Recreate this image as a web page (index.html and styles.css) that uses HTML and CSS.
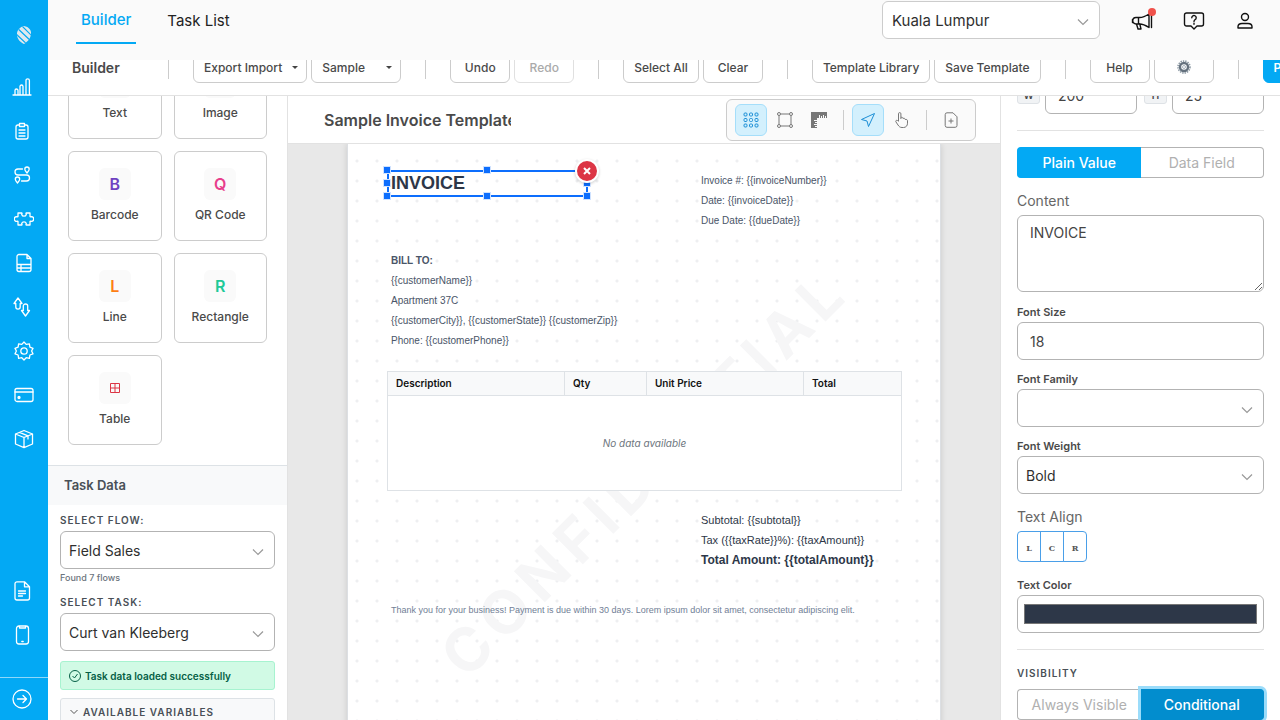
FILE: index.html
```html
<!DOCTYPE html>
<html lang="en">
<head>
<meta charset="utf-8">
<meta name="viewport" content="width=device-width, initial-scale=1">
<title>Builder</title>
<link rel="stylesheet" href="styles.css">
</head>
<body>
<nav class="rail" aria-label="Main">
  <a class="rail-logo" href="#" aria-label="Home">
    <svg width="16" height="20" viewBox="0 0 16 20"><defs><clipPath id="leaf"><path d="M8 1C13 2 15.500 5 15 9c-.5 5-4 8-7 10C4 17 1 14 1 9c0-4 3-7 7-8z"/></clipPath></defs><g clip-path="url(#leaf)"><rect width="16" height="20" fill="#dfe9ee"/><path d="M-2 7l18 17M-1 1l18 17M4-1l14 14" stroke="#03a9f4" stroke-width="1.200"/></g></svg>
  </a>
  <a class="rail-item rail-narrow" href="#" aria-label="Reports"><svg class="ic" viewBox="0 0 20 20"><path d="M1 18h18M3 18v-4.500a1.500 1.500 0 013 0V18M8 18V9.500a1.500 1.500 0 013 0V18M14 18V3.500a1.700 1.700 0 013.400 0V18"/></svg></a>
  <a class="rail-item rail-narrow" href="#" aria-label="Tasks"><svg class="ic" viewBox="0 0 20 20"><path d="M7 4H6a2 2 0 00-2 2v10a2 2 0 002 2h8a2 2 0 002-2V6a2 2 0 00-2-2h-1M7.500 2.500h5v3h-5zM7 9h6M7 12h6M7 15h6"/></svg></a>
  <a class="rail-item rail-narrow" href="#" aria-label="Flows"><svg class="ic" viewBox="0 0 20 20"><path d="M15 8c-1.500-1.700-2.200-2.700-2.200-3.800a2.200 2.200 0 014.400 0C17.200 5.300 16.500 6.300 15 8zM5.500 18c-1.500-1.700-2.200-2.700-2.200-3.800a2.200 2.200 0 014.400 0c0 1.100-.7 2.100-2.200 3.800zM10.500 4H6a3 3 0 000 6h8.500a3 3 0 010 6H9.500"/></svg></a>
  <a class="rail-item" href="#" aria-label="Integrations"><svg class="ic" viewBox="0 0 20 20"><path d="M4 4h3.800c.4 0 .2.800-.1 1.500a2.400 2.400 0 004.600 0c-.3-.7-.5-1.500-.1-1.500H16v3.500c0 .5.800.3 1.300.1a2 2 0 010 4.800c-.5-.2-1.300-.4-1.300.1V16h-3.800c-.4 0-.2-.8.1-1.500a2.400 2.400 0 00-4.600 0c.3.700.5 1.500.1 1.500H4v-3.500c0-.5-.8-.3-1.300-.1a2 2 0 010-4.800c.5.200 1.300.4 1.300-.1z"/></svg></a>
  <a class="rail-item" href="#" aria-label="Forms"><svg class="ic" viewBox="0 0 20 20"><path d="M5 1.500h8l4 4V16.500a2 2 0 01-2 2H5a2 2 0 01-2-2v-13a2 2 0 012-2zM13 1.500v4h4M3 11.500h14M3 15h14M7 11.500v7"/></svg></a>
  <a class="rail-item rail-narrow" href="#" aria-label="Transfers"><svg class="ic" viewBox="0 0 20 20"><path d="M6 1L10 6.500H8.200V10c0 2.700-4.400 2.700-4.400 0V6.500H2zM13.500 19l-4-5.500h1.800V9c0-2.700 4.400-2.700 4.400 0v4.500h1.800z"/></svg></a>
  <a class="rail-item" href="#" aria-label="Settings"><svg class="ic" viewBox="0 0 20 20"><path d="M10 1l2.200 2.400 3.200-.6.500 3.300 3.100 1.300L17.600 10l1.400 2.800-3.100 1.200-.5 3.300-3.200-.6L10 19l-2.200-2.300-3.200.6-.5-3.300L1 12.800 2.400 10 1 7.400l3.100-1.300.5-3.300 3.200.6z"/><circle cx="10" cy="10" r="3.200"/></svg></a>
  <a class="rail-item" href="#" aria-label="Billing"><svg class="ic" viewBox="0 0 20 20"><rect x="1" y="3.500" width="18" height="13" rx="2"/><path d="M1 7h18"/><circle cx="5" cy="12.500" r="1" fill="#fff"/></svg></a>
  <a class="rail-item" href="#" aria-label="Products"><svg class="ic" viewBox="0 0 20 20"><path d="M10 1.500l8.500 3.500v10L10 18.700 1.500 15V5zM1.500 5L10 8.500 18.500 5M10 8.500v10M5.500 3.400l8.500 3.500v3"/></svg></a>
  <span class="rail-space"></span>
  <a class="rail-item rail-narrow" href="#" aria-label="Documents"><svg class="ic" viewBox="0 0 20 20"><path d="M5 .8h7.500l5 5V17a2 2 0 01-2 2H5a2 2 0 01-2-2V2.800a2 2 0 012-2zM12.500.8v5h5M6.500 10h7M6.500 12.500h7M6.500 15h4"/></svg></a>
  <a class="rail-item rail-narrow" href="#" aria-label="Mobile"><svg class="ic" viewBox="0 0 20 20"><rect x="4.500" y="1" width="12" height="18" rx="2.500"/><path d="M7.500 1.500v1.500h6V1.500M9.800 16.500h1.400"/></svg></a>
  <a class="rail-foot rail-narrow" href="#" aria-label="Expand"><svg class="ic" viewBox="0 0 20 20"><circle cx="10" cy="10" r="9"/><path d="M5.500 10h9M11 6.500l3.500 3.500-3.500 3.500"/></svg></a>
</nav>

<div class="app">
  <header class="top">
    <nav class="tabs" aria-label="Sections">
      <a class="tab tab-on" href="#">Builder</a>
      <a class="tab" href="#">Task List</a>
    </nav>
    <div class="top-right">
      <div class="pick pick-city">
        <select class="field" aria-label="City"><option>Kuala Lumpur</option></select>
        <svg class="chev" viewBox="0 0 12 8"><path d="M1 1.500l5 5 5-5"/></svg>
      </div>
      <div class="top-icons">
        <button class="bare" aria-label="Announcements"><svg class="ink" width="22" height="20" viewBox="0 0 22 20"><path d="M5 6.500h3.500C12 6.500 15 5 18 3v13.500c-3-2-6-3.500-9.500-3.500H5a3.200 3.200 0 010-6.500zM7.500 6.500V13M5.500 13l1.500 5h3l-1.200-5M20.500 3.500v13M1.500 8.500v3"/></svg><span class="dot"></span></button>
        <button class="bare" aria-label="Help"><svg class="ink" width="22" height="20" viewBox="0 0 22 20"><path d="M3.500 2h15a2 2 0 012 2v9a2 2 0 01-2 2H14l-3 3-3-3H3.500a2 2 0 01-2-2V4a2 2 0 012-2zM8.800 6.800a2.200 2.200 0 114 1.200c-.6.700-1.800 1.200-1.800 2.500M11 12.300v.9"/></svg></button>
        <button class="bare" aria-label="Account"><svg class="ink" width="20" height="20" viewBox="0 0 20 20"><circle cx="10" cy="6" r="3.500"/><path d="M3 17v-1.200C3 13.500 5 12.500 7 12.500h6c2 0 4 1 4 3.300V17z"/></svg></button>
      </div>
    </div>
  </header>

  <div class="toolbar">
    <h1 class="brand">Builder</h1>
    <span class="sep"></span>
    <div class="group"><button class="btn btn-menu">Export Import<i class="caret"></i></button><button class="btn btn-menu btn-sample">Sample<i class="caret"></i></button></div>
    <span class="sep"></span>
    <div class="group"><button class="btn">Undo</button><button class="btn" disabled>Redo</button></div>
    <span class="sep"></span>
    <div class="group"><button class="btn">Select All</button><button class="btn">Clear</button></div>
    <span class="sep"></span>
    <div class="group"><button class="btn">Template Library</button><button class="btn">Save Template</button></div>
    <span class="sep"></span>
    <div class="group"><button class="btn">Help</button><button class="btn" aria-label="Settings"><svg width="14" height="14" viewBox="0 0 14 14" fill="none"><circle cx="7" cy="7" r="6" stroke="#8b98a3" stroke-width="1.600" stroke-dasharray="1.400 1"/><circle cx="7" cy="7" r="4" stroke="#64717e" stroke-width="2.400"/><circle cx="7" cy="7" r="1.500" stroke="#a9b5bf"/></svg></button></div>
    <span class="sep"></span>
    <button class="btn btn-main">Preview</button>
  </div>

  <div class="work">
    <aside class="left">
      <div class="palette">
        <div class="tiles">
          <button class="tile"><span class="glyph"></span>Text</button>
          <button class="tile"><span class="glyph"></span>Image</button>
          <button class="tile"><span class="glyph g-violet">B</span>Barcode</button>
          <button class="tile"><span class="glyph g-pink">Q</span>QR Code</button>
          <button class="tile"><span class="glyph g-orange">L</span>Line</button>
          <button class="tile"><span class="glyph g-green">R</span>Rectangle</button>
          <button class="tile"><span class="glyph"><svg width="10" height="10" viewBox="0 0 10 10" fill="none" stroke="#dc3545"><path d="M.5.5h9v9h-9zM5 .5v9M.5 5h9"/></svg></span>Table</button>
        </div>
      </div>
      <h2 class="data-head">Task Data</h2>
      <div class="data">
        <label class="caps" for="flow">Select Flow:</label>
        <div class="pick">
          <select class="field" id="flow"><option>Field Sales</option></select>
          <svg class="chev" viewBox="0 0 12 8"><path d="M1 1.500l5 5 5-5"/></svg>
        </div>
        <p class="hint">Found 7 flows</p>
        <label class="caps" for="task">Select Task:</label>
        <div class="pick">
          <select class="field" id="task"><option>Curt van Kleeberg</option></select>
          <svg class="chev" viewBox="0 0 12 8"><path d="M1 1.500l5 5 5-5"/></svg>
        </div>
        <p class="ok"><svg width="12" height="12" viewBox="0 0 12 12" fill="none" stroke="#065f46"><circle cx="6" cy="6" r="5.500"/><path d="M3.500 6l2 2 3-4"/></svg>Task data loaded successfully</p>
        <button class="vars"><svg width="8" height="6" viewBox="0 0 8 6" fill="none" stroke="#555"><path d="M.5 1L4 4.500 7.500 1"/></svg>Available Variables</button>
      </div>
    </aside>

    <main class="center">
      <div class="center-bar">
        <input class="title" value="Sample Invoice Template" aria-label="Template name">
        <div class="tools">
          <button class="tool tool-on" aria-label="Grid"><svg width="16" height="16" viewBox="0 0 16 16"><g id="r"><rect x="1" y="1" width="3" height="3" rx="1"/><rect x="6.500" y="1" width="3" height="3" rx="1"/><rect x="12" y="1" width="3" height="3" rx="1"/></g><use href="#r" y="5.500"/><use href="#r" y="11"/></svg></button>
          <button class="tool" aria-label="Bounds"><svg width="16" height="16" viewBox="0 0 16 16"><path d="M3.500 2h9M3.500 14h9M2 3.500v9M14 3.500v9"/><circle cx="2" cy="2" r="1.500"/><circle cx="14" cy="2" r="1.500"/><circle cx="2" cy="14" r="1.500"/><circle cx="14" cy="14" r="1.500"/></svg></button>
          <button class="tool" aria-label="Rulers"><svg width="16" height="16" viewBox="0 0 16 16"><path d="M0 0h16v6h-1V4h-1v2h-1V3h-1v3h-1V4h-1v2H9V3H8v3H6v2H3v1h3v1H4v1h2v1H3v1h3v1H4v1h2v1H0z" fill="#777" stroke="none"/></svg></button>
          <span class="tool-sep"></span>
          <button class="tool tool-on" aria-label="Select"><svg width="16" height="16" viewBox="0 0 16 16"><path d="M14.500 1.500L1.500 7.500l5.500 1.500 1.500 5.500z"/></svg></button>
          <button class="tool" aria-label="Pan"><svg width="16" height="16" viewBox="0 0 16 16"><path d="M4.500 9V1.800a1.200 1.200 0 012.400 0V7M6.900 5.500c1.200-.6 2 0 2.100 1 1.200-.6 2 0 2.200 1 1.400-.4 2.300.2 2.300 1.400v2.300c0 2.500-1.500 4.300-4 4.300H8c-2 0-3-1-4-2.500L1.800 9.700c-.3-1 .8-1.900 1.700-1.200l1 1"/></svg></button>
          <span class="tool-sep"></span>
          <button class="tool" aria-label="Add page"><svg width="16" height="16" viewBox="0 0 16 16"><path d="M4 .8h6l4 4V13.500a1.800 1.800 0 01-1.800 1.800H4a1.800 1.800 0 01-1.800-1.800V2.600A1.800 1.800 0 014 .8zM8 6.500v5M5.500 9h5"/></svg></button>
        </div>
      </div>
      <div class="stage">
        <div class="page">
          <div class="mark">CONFIDENTIAL</div>
          <div class="el sel">INVOICE
            <i class="h h-nw"></i><i class="h h-n"></i><i class="h h-w"></i><i class="h h-e"></i><i class="h h-sw"></i><i class="h h-s"></i><i class="h h-se"></i>
            <button class="del" aria-label="Delete"><svg width="8" height="8" viewBox="0 0 8 8"><path d="M1 1l6 6M7 1L1 7" stroke="#fff" stroke-width="2"/></svg></button>
          </div>
          <div class="el meta"><p>Invoice #: {{invoiceNumber}}</p><p>Date: {{invoiceDate}}</p><p>Due Date: {{dueDate}}</p></div>
          <div class="el bill"><p class="b">BILL TO:</p><p>{{customerName}}</p><p>Apartment 37C</p><p>{{customerCity}}, {{customerState}} {{customerZip}}</p><p>Phone: {{customerPhone}}</p></div>
          <table class="lines">
            <colgroup><col class="c1"><col class="c2"><col class="c3"><col class="c4"></colgroup>
            <thead><tr><th>Description</th><th>Qty</th><th>Unit Price</th><th>Total</th></tr></thead>
            <tbody><tr><td colspan="4">No data available</td></tr></tbody>
          </table>
          <div class="el sums"><p>Subtotal: {{subtotal}}</p><p>Tax ({{taxRate}}%): {{taxAmount}}</p><p class="grand">Total Amount: {{totalAmount}}</p></div>
          <p class="el thanks">Thank you for your business! Payment is due within 30 days. Lorem ipsum dolor sit amet, consectetur adipiscing elit.</p>
        </div>
      </div>
    </main>

    <aside class="right">
      <div class="dims-clip"><div class="dims">
        <label class="badge" for="w">W</label><input class="field" id="w" value="200">
        <label class="badge" for="h">H</label><input class="field" id="h" value="25">
      </div></div>
      <hr class="rule">
      <div class="switch"><button class="on">Plain Value</button><button>Data Field</button></div>
      <label class="lab-big" for="content">Content</label>
      <textarea class="field area" id="content">INVOICE</textarea>
      <label class="lab" for="size">Font Size</label>
      <input class="field" id="size" value="18">
      <label class="lab" for="family">Font Family</label>
      <div class="pick">
        <select class="field" id="family"><option></option></select>
        <svg class="chev" viewBox="0 0 12 8"><path d="M1 1.500l5 5 5-5"/></svg>
      </div>
      <label class="lab" for="weight">Font Weight</label>
      <div class="pick">
        <select class="field" id="weight"><option>Bold</option></select>
        <svg class="chev" viewBox="0 0 12 8"><path d="M1 1.500l5 5 5-5"/></svg>
      </div>
      <span class="lab-big">Text Align</span>
      <div class="align"><button>L</button><button>C</button><button>R</button></div>
      <label class="lab lab-color" for="color">Text Color</label>
      <input class="field color" id="color" type="color" value="#2d3748">
      <hr class="rule">
      <h3 class="caps caps-vis">Visibility</h3>
      <div class="switch"><button>Always Visible</button><button class="on focus">Conditional</button></div>
    </aside>
  </div>
</div>
</body>
</html>
```

FILE: styles.css
```css
* { box-sizing: border-box; }
body, p, h1, h2, h3 { margin: 0; }
body {
  display: flex;
  height: 100vh;
  overflow: hidden;
  font-family: Inter, "Liberation Sans", sans-serif;
  font-size: 14px;
  color: #4a4a4a;
  background: #fff;
}
button, input, select, textarea { font: inherit; color: inherit; }
button { cursor: pointer; }
a { color: inherit; text-decoration: none; }

/* Icon rail */
.rail { flex: none; width: 48px; display: flex; flex-direction: column; background: #03a9f4; }
.rail-logo { height: 65px; padding-top: 5px; display: grid; place-items: center; }
.rail-item, .rail-foot { display: grid; place-items: center; height: 44px; }
.rail-narrow { padding-right: 4px; }
.rail-space { flex: 1; }
.rail-foot { height: 43px; margin-top: 20px; border-top: 1px solid #8fd8fa; }
.ic { width: 20px; height: 20px; fill: none; stroke: #fff; stroke-width: 1.3; stroke-linejoin: round; stroke-linecap: round; }

/* Header */
.app { flex: 1; min-width: 0; display: flex; flex-direction: column; }
.top { flex: none; height: 60px; padding: 0 25px 0 28px; display: flex; justify-content: space-between; background: #fafafa; }
.tabs { display: flex; gap: 26px; }
.tab { height: 44px; padding: 0 5px; line-height: 42px; font-size: 15px; color: #222; border-bottom: 2px solid transparent; }
.tab-on { color: #03a9f4; font-weight: 500; line-height: 40px; border-color: #03a9f4; }
.top-right { display: flex; gap: 31px; padding-top: 1px; }
.pick { position: relative; }
.pick-city { width: 218px; }
.pick-city .field { font-size: 15px; border-color: #ccc; }
.top-icons { display: flex; align-items: center; gap: 30px; height: 40px; }
.bare { position: relative; display: flex; padding: 0; border: 0; background: none; }
.ink { fill: none; stroke: #111; stroke-width: 1.4; stroke-linejoin: round; stroke-linecap: round; }
.dot { position: absolute; top: -3px; right: -3px; width: 8px; height: 8px; border-radius: 50%; background: #f0524b; }

/* Form fields */
.field { display: block; width: 100%; height: 38px; padding: 0 12px; border: 1px solid #b3b3b3; border-radius: 6px; background: #fff; color: #444; font-size: 14px; }
select.field { appearance: none; padding: 0 30px 0 8px; color: #2f2f2f; }
.pick-city select.field { padding-left: 9px; }
.chev { position: absolute; right: 11px; top: 17px; width: 12px; height: 8px; fill: none; stroke: #999; stroke-width: 1.2; pointer-events: none; }

/* Toolbar */
.toolbar { flex: none; height: 36px; overflow: hidden; padding: 0 0 12px 24px; display: flex; align-items: flex-end; gap: 24px; border-bottom: 1px solid #e2e2e2; }
.brand { flex: none; width: 72px; font-size: 14px; font-weight: 600; line-height: 30px; }
.sep { flex: none; width: 1px; height: 28px; margin-bottom: 4px; background: #ccc; }
.group { flex: none; display: flex; gap: 4px; }
.btn { flex: none; display: flex; align-items: center; justify-content: center; min-width: 60px; height: 32px; padding: 0 10px; border: 1px solid #ccc; border-radius: 6px; background: #fff; font-size: 12px; font-weight: 500; white-space: nowrap; }
.btn-menu { justify-content: space-between; gap: 10px; padding-right: 8px; }
.btn-sample { min-width: 90px; }
.btn:disabled { color: #aaa; border-color: #e0e0e0; }
.btn-main { background: #03a9f4; border-color: #03a9f4; color: #fff; font-weight: 600; }
.caret { border: 3px solid transparent; border-top-color: #444; border-bottom: 0; }

.work { flex: 1; min-height: 0; display: flex; }

/* Element palette and task data */
.left { flex: none; width: 240px; display: flex; flex-direction: column; overflow: hidden; border-right: 1px solid #e2e2e2; }
.palette { flex: 1; min-height: 0; overflow: hidden; display: flex; flex-direction: column; justify-content: flex-end; }
.tiles { flex: none; display: grid; grid-template-columns: 1fr 1fr; gap: 12px; padding: 20px; }
.tile { display: flex; flex-direction: column; align-items: center; gap: 6px; height: 90px; padding: 16px 0 0; border: 1px solid #ccc; border-radius: 6px; background: #fff; font-size: 12px; font-weight: 500; line-height: 18px; }
.glyph { display: grid; place-items: center; width: 32px; height: 32px; border-radius: 6px; background: #fafafa; font-size: 16px; font-weight: 600; }
.g-violet { color: #6f42c1; }
.g-pink { color: #e83e8c; }
.g-orange { color: #fd7e14; }
.g-green { color: #20c997; }
.data-head { flex: none; height: 40px; padding-left: 16px; font-size: 13px; font-weight: 600; line-height: 39px; border-top: 1px solid #dde2e6; background: #f8f9fa; color: #495057; }
.data { flex: none; height: 215px; padding: 8px 12px 0; }
.caps { display: block; height: 18px; line-height: 15px; font-size: 10px; font-weight: 600; letter-spacing: 1px; text-transform: uppercase; color: #495057; }
.hint { height: 26px; font-size: 9px; font-weight: 500; line-height: 18px; color: #6c757d; }
.ok { display: flex; align-items: center; gap: 4px; height: 29px; margin: 10px 0 8px; padding-left: 8px; border: 1px solid #a7f3d0; border-radius: 3px; background: #d1fae5; color: #065f46; font-size: 10px; font-weight: 600; }
.vars { display: flex; align-items: center; gap: 5px; width: 100%; height: 28px; padding: 0 9px; border: 1px solid #dde2e6; border-radius: 3px 3px 0 0; background: #f8f9fa; color: #495057; font-size: 10px; font-weight: 600; letter-spacing: 1px; text-transform: uppercase; }

/* Canvas */
.center { flex: 1; min-width: 0; display: flex; flex-direction: column; background: #e8e8e8; }
.center-bar { flex: none; height: 48px; padding: 0 24px 0 36px; display: flex; align-items: center; justify-content: space-between; background: #fff; border-bottom: 1px solid #e2e2e2; }
.title { width: 187px; padding: 0; border: 0; font-size: 16px; font-weight: 600; color: #4a4a4a; background: none; }
.tools { display: flex; align-items: center; gap: 2px; height: 42px; padding: 0 8px; border: 1px solid #ccc; border-radius: 6px; background: #fafafa; }
.tool { display: grid; place-items: center; width: 32px; height: 32px; padding: 0; border: 1px solid transparent; border-radius: 6px; background: none; }
.tool svg { fill: none; stroke: #777; stroke-width: 1; stroke-linejoin: round; }
.tool-on { background: #d3f0fd; border-color: #a5defa; }
.tool-on svg { stroke: #1d8fd6; }
.tool-sep { width: 1px; height: 20px; margin: 0 6px; background: #ccc; }
.stage { flex: 1; min-height: 0; overflow: hidden; display: flex; justify-content: center; }
.page { position: relative; flex: none; width: 594px; height: 842px; border: solid #dcdfe3; border-width: 0 1px; background: #fff radial-gradient(circle, #eeeff1 1px, transparent 2px) -1px 7px / 20px 20px; box-shadow: 0 0 6px #0002; font-family: "Liberation Sans", Arial, sans-serif; font-size: 10px; line-height: 20px; color: #4a5568; }
.mark { position: absolute; left: 296px; top: 328px; transform: translate(-50%, -50%) rotate(-45deg); font-family: Inter, sans-serif; font-size: 60px; font-weight: 700; line-height: 72px; letter-spacing: 8px; color: #f6f6f7; }
.el { position: absolute; padding: 0 4px; white-space: nowrap; }
.sel { left: 39px; top: 26px; width: 201px; height: 27px; padding: 0 2px; border: 2px solid #0d6efd; font-size: 18px; font-weight: 700; color: #2d3748; line-height: 22px; }
.h { position: absolute; width: 8px; height: 8px; background: #0d6efd; border: 1px solid #cfe2ff; }
.h-nw { left: -6px; top: -6px; }
.h-n { left: 94px; top: -6px; }
.h-w { left: -6px; top: 7px; }
.h-e { right: -5px; top: 7px; }
.h-sw { left: -6px; bottom: -5px; }
.h-s { left: 94px; bottom: -5px; }
.h-se { right: -5px; bottom: -5px; }
.del { position: absolute; right: -13px; top: -13px; width: 24px; height: 24px; padding: 0; display: grid; place-items: center; border: 2px solid #fff; border-radius: 50%; background: #dc3545; box-shadow: 0 1px 3px #0003; }
.meta { left: 349px; top: 27px; }
.bill { left: 39px; top: 107px; }
.b { font-weight: 700; }
.lines { position: absolute; left: 39px; top: 227px; width: 515px; height: 120px; table-layout: fixed; border-collapse: collapse; background: #fff; font-family: Inter, sans-serif; line-height: 14px; }
.lines th { height: 24px; padding: 0 8px 1px; border: 1px solid #dee2e6; background: #f8f9fa; text-align: left; font-weight: 600; color: #111; }
.lines td { border: 1px solid #dee2e6; text-align: center; font-style: italic; color: #6c757d; }
.c1 { width: 177px; }
.c2 { width: 82px; }
.c3 { width: 157px; }
.sums { left: 349px; top: 366px; font-size: 11px; color: #2d3748; }
.grand { font-size: 12px; font-weight: 700; }
.thanks { left: 39px; top: 456px; font-size: 9px; color: #718096; }

/* Properties */
.right { flex: none; width: 280px; padding: 0 16px; overflow: hidden; border-left: 1px solid #e2e2e2; }
.dims-clip { height: 18px; overflow: hidden; display: flex; flex-direction: column; justify-content: flex-end; }
.dims { flex: none; display: flex; align-items: center; gap: 5px; }
.dims .field { flex: 1; min-width: 0; }
.badge { width: 23px; height: 18px; border: 1px solid #dee2e6; border-radius: 3px; background: #f1f3f5; text-align: center; font-size: 10px; font-weight: 600; line-height: 16px; }
.dims .field + .badge { margin-left: 2px; }
.rule { height: 1px; margin: 16px 0; border: 0; background: #e2e2e2; }
.switch { display: flex; height: 31px; }
.switch button { flex: 1; padding: 0; border: 1px solid #b3b3b3; background: #fff; color: #b0b0b0; }
.switch button:first-child { border-radius: 4px 0 0 4px; border-right: 0; }
.switch button:last-child { border-radius: 0 4px 4px 0; border-left: 0; }
.switch .on { background: #03a9f4; border-color: #03a9f4; color: #fff; font-weight: 500; }
.switch .focus { background: #028dce; border-color: #028dce; box-shadow: 0 0 0 3px #9bdcfa; }
.lab-big { display: block; height: 37px; padding-top: 15px; line-height: 16px; font-size: 14px; color: #666; }
.area { height: 77px; margin-bottom: 1px; padding: 9px 12px; line-height: 16px; }
.lab { display: block; height: 29px; padding-top: 11px; line-height: 16px; font-size: 11px; font-weight: 600; }
.align { display: flex; height: 31px; }
.align button { width: 24px; padding: 3px 0 0; margin-right: -1px; border: 1px solid #4a9fe8; background: #fff; font-family: "DejaVu Serif", serif; font-size: 8px; font-weight: 700; color: #555; }
.align button:first-child { border-radius: 4px 0 0 4px; }
.align button:last-child { border-radius: 0 4px 4px 0; }
.lab-color { height: 33px; padding-top: 15px; }
.color { padding: 4px; }
.caps-vis { height: 23px; }
```
